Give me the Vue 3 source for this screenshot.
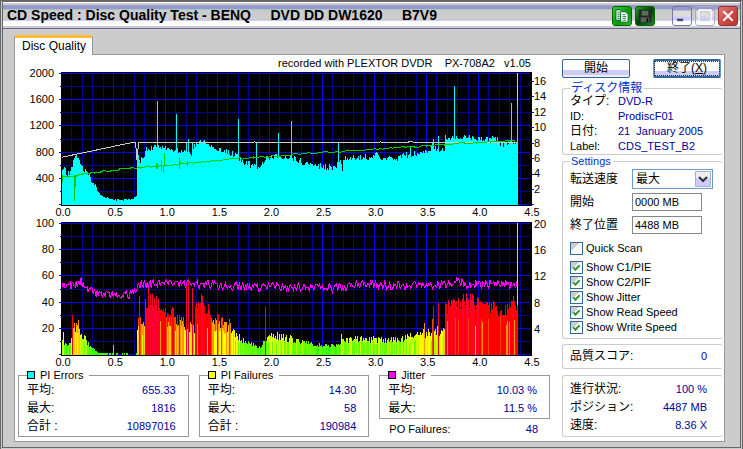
<script setup>
import { ref } from 'vue'

const PLOT_LEFT = 62
const STEP = 52

function lcg(seed) {
  let s = seed
  return () => {
    s = (s * 1664525 + 1013904223) % 4294967296
    return s / 4294967296
  }
}

function at(points, x) {
  for (let i = 1; i < points.length; i++) {
    const [x0, y0] = points[i - 1]
    const [x1, y1] = points[i]
    if (x <= x1) return x1 === x0 ? y1 : y0 + ((y1 - y0) * (x - x0)) / (x1 - x0)
  }
  return points[points.length - 1][1]
}

/* PI errors: smoothed profile plus isolated peaks */
const pieProfile = [
  [62, 172], [64, 168], [66, 174], [70, 173], [73, 161], [76, 155], [79, 160], [82, 168], [88, 175],
  [92, 181], [95, 185], [98, 193], [102, 196], [107, 198], [114, 200], [125, 200], [133, 199], [136, 196],
  [137, 157], [140, 160], [143, 159], [146, 148], [152, 149], [157, 144], [161, 147], [167, 149],
  [175, 150], [182, 152], [188, 155], [192, 153], [194, 145], [197, 142], [203, 142], [208, 145], [214, 148], [222, 151],
  [230, 153], [237, 155], [241, 162], [248, 164], [255, 167], [259, 170], [262, 164], [267, 157],
  [280, 157], [290, 157], [296, 160], [304, 163], [314, 165], [324, 167], [335, 167], [337, 157], [341, 167],
  [342, 157], [354, 158], [367, 157], [375, 155], [383, 159], [397, 158], [404, 155], [417, 154],
  [427, 151], [431, 146], [437, 149], [443, 149], [444, 138], [457, 137], [470, 138], [484, 138],
  [496, 140], [499, 144], [517, 144],
]
const piePeaks = {
  157: 101, 176: 114, 186: 143, 188: 139, 192: 143, 238: 119, 256: 143, 278: 133, 290: 121, 337: 143, 341: 171,
  409: 148, 432: 139, 437: 136, 453: 86, 510: 103, 516: 105,
}
const noise = lcg(11)
let piePath = ''
for (let x = 62; x < 517; x++) {
  const y = piePeaks[x] ?? Math.round(at(pieProfile, x) + (noise() - 0.5) * (x > 92 && x < 137 ? 2 : 6))
  piePath += `M${x} ${y}h1V205h-1z`
}

/* PI failures: one column per sample, tinted by its value */
const pifProfile = [
  [62, 342], [66, 345], [70, 341], [72, 333], [76, 323], [82, 335], [88, 344], [93, 349], [98, 353], [136, 353],
  [137, 330], [139, 320], [144, 328], [145, 302], [150, 300], [156, 304], [162, 309], [170, 313], [180, 319],
  [186, 325], [194, 327], [195, 302], [200, 299], [206, 308], [212, 318], [217, 321], [228, 327], [238, 337], [244, 342],
  [252, 344], [261, 348], [263, 338], [270, 336], [282, 336], [295, 341], [312, 344], [326, 346], [334, 345],
  [340, 341], [355, 339], [380, 340], [397, 340], [412, 336], [422, 334], [434, 331], [443, 331], [444, 307],
  [450, 302], [460, 302], [472, 301], [486, 305], [496, 309], [502, 312], [510, 307], [517, 305],
]
const pifPeaks = {
  63: 332, 72: 315, 113: 345, 139: 296, 148: 286, 150: 294, 152: 294, 156: 296, 186: 285, 188: 279, 192: 288,
  202: 296, 217: 314, 229: 319, 265: 307, 340: 334, 423: 323, 431: 319, 432: 306, 437: 303,
  462: 294, 465: 293, 471: 294, 512: 296,
}
function tint(y) {
  const v = (354 - y) / 1.31
  if (v < 6) return '#33ff00'
  if (v < 10) return '#66ff00'
  if (v < 12) return '#aaff00'
  if (v < 15) return '#ccff00'
  if (v < 19) return '#ffff00'
  if (v < 22) return '#ffcc00'
  if (v < 26) return '#ff9900'
  if (v < 29) return '#ff4400'
  if (v < 41) return '#ff0000'
  return '#ff0033'
}
const pifBars = []
const rough = lcg(29)
for (let x = 62; x < 517; x++) {
  const base = at(pifProfile, x)
  const quiet = x > 97 && x < 137
  if (quiet && x > 107 && x !== 113 && rough() < 0.65) continue
  const depth = 354 - base
  const y = pifPeaks[x] ?? Math.round(base + (quiet ? 0 : (rough() - 0.5) * Math.min(15, depth * 0.5)))
  pifBars.push({ x, y, h: 355 - y, fill: tint(y) })
  if (!quiet && rough() < 0.4 && !pifPeaks[x]) {
    const low = Math.round(354 - (354 - y) * (0.62 + rough() * 0.25))
    pifBars.push({ x, y: low, h: 355 - low, fill: tint(low) })
  }
}

const jitterProfile = [
  [62, 285], [74, 286], [81, 281], [86, 287], [95, 292], [106, 295], [118, 297], [126, 295], [134, 293],
  [137, 286], [139, 284], [165, 283], [190, 284], [212, 284], [220, 287], [240, 286], [258, 287], [270, 286],
  [300, 287], [320, 288], [345, 287], [352, 284], [380, 284], [400, 285], [440, 285], [458, 282], [465, 284], [500, 284], [516, 285],
]
const jit = lcg(5)
const jitter = []
for (let x = 62; x < 517; x++) jitter.push(`${x},${Math.round(at(jitterProfile, x) + (jit() - 0.5) * 9)}`)

const speedProfile = [[62, 177], [75, 175], [120, 169], [167, 165], [217, 160], [280, 155], [340, 151], [403, 147], [460, 143], [516, 140]]
const wob = lcg(8)
const readSpeed = []
for (let x = 62; x < 516; x += 2) readSpeed.push(`${x},${Math.round(at(speedProfile, x) + (wob() - 0.5) * 1.4)}`)

const charts = [
  {
    id: 'pie', title: 'PI errors and speed', box: '15 55 545 164', top: 73,
    left: ['2000', '1600', '1200', '800', '400'],
    right: ['16', '14', '12', '10', '8', '6', '4', '2'].map((t, i) => ({ t, y: 81 + Math.round(i * 15.4) })),
  },
  {
    id: 'pif', title: 'PI failures and jitter', box: '15 219 545 150', top: 223,
    left: ['100', '80', '60', '40', '20'],
    right: ['20', '16', '12', '8', '4'].map((t, i) => ({ t, y: 224 + Math.round(i * 26.2) })),
  },
]
const rows = Array.from({ length: 11 }, (_, i) => ({ y: Math.round(i * 13.1), major: i % 2 === 0 }))
const cols = Array.from({ length: 45 }, (_, i) => ({ x: PLOT_LEFT - 1 + Math.round((i + 1) * 10.4), major: i % 5 === 4 }))
const axis = Array.from({ length: 10 }, (_, i) => ({ t: (i / 2).toFixed(1), x: PLOT_LEFT + 1 + i * STEP }))

const heading = 'CD Speed : Disc Quality Test - BENQ' + '\u00a0'.repeat(5) + 'DVD DD DW1620' + '\u00a0'.repeat(5) + 'B7V9'
const recorder = 'recorded with PLEXTOR DVDR\u00a0\u00a0\u00a0 PX-708A2\u00a0\u00a0 v1.05'

const discInfo = [
  ['タイプ:', 'DVD-R'],
  ['ID:', 'ProdiscF01'],
  ['日付:', '21  January 2005'],
  ['Label:', 'CDS_TEST_B2'],
]
const stats = [
  { name: 'PI Errors', color: '#00ffff', rows: [['平均:', '655.33'], ['最大:', '1816'], ['合計 :', '10897016']] },
  { name: 'PI Failures', color: '#ffff00', rows: [['平均:', '14.30'], ['最大:', '58'], ['合計 :', '190984']] },
  { name: 'Jitter', color: '#ff00ff', rows: [['平均:', '10.03 %'], ['最大:', '11.5 %']] },
]
const progress = [['進行状況:', '100 %'], ['ポジション:', '4487 MB'], ['速度:', '8.36 X']]

const speed = ref('最大')
const start = ref('0000 MB')
const end = ref('4488 MB')
const quick = ref(false)
const shows = ref([
  { label: 'Show C1/PIE', on: true },
  { label: 'Show C2/PIF', on: true },
  { label: 'Show Jitter', on: true },
  { label: 'Show Read Speed', on: true },
  { label: 'Show Write Speed', on: true },
])
</script>

<template>
  <div class="window">
    <header class="titlebar">
      <h1>{{ heading }}</h1>
      <button class="cap green" aria-label="Copy">
        <svg viewBox="0 0 19 19"><path d="M3 3h5l2 2v9H3z" fill="#cfe8cf" stroke="#063" /><path d="M8 5h5l3 3v8H8z" fill="#fff" stroke="#063" /><path d="M10 8h3M10 10h4M10 12h4M10 14h4M5 6h2M5 8h2M5 10h2M5 12h2" stroke="#474" /></svg>
      </button>
      <button class="cap green dark" aria-label="Save">
        <svg viewBox="0 0 19 19"><path d="M3 3h13v13H4l-1-1z" fill="#222a22" /><path d="M6 4h7v5H6z" fill="#567056" /><path d="M5 11h9v5H5z" fill="#59645c" /><path d="M11 12h2v4h-2z" fill="#111" /></svg>
      </button>
      <span class="spacer"></span>
      <button class="cap" aria-label="Minimize">
        <svg viewBox="0 0 19 19"><path d="M4 12h7v3H4z" fill="#336" stroke="#fff" stroke-width=".5" /></svg>
      </button>
      <button class="cap faded" aria-label="Maximize">
        <svg viewBox="0 0 19 19"><path d="M4 4h11v11H4z" fill="none" stroke="#fff" stroke-width="3" /><path d="M4.500 5h10v9h-10z" fill="none" stroke="#b4b4b4" /></svg>
      </button>
      <button class="cap close" aria-label="Close">
        <svg viewBox="0 0 19 19"><path d="M4.500 4.500l10 10M14.500 4.500l-10 10" stroke="#fff" stroke-width="2" /></svg>
      </button>
    </header>

    <main class="body">
      <nav><button class="tab">Disc Quality</button></nav>
      <div class="panel">
        <section class="left">
          <svg v-for="c in charts" :key="c.id" class="chart" :viewBox="c.box" role="img" :aria-label="c.title">
            <text v-if="c.id === 'pie'" x="530" y="67" text-anchor="end">{{ recorder }}</text>
            <g shape-rendering="crispEdges">
              <rect x="61" :y="c.top - 1" width="470" height="134" fill="#000" />
              <rect v-for="l in cols.filter(l => !l.major && l.x < 530)" :key="'m' + l.x" :x="l.x" :y="c.top" width="1" height="132" fill="#000099" />
              <rect v-for="r in rows" :key="r.y" :x="r.major ? 59 : 60" :y="c.top + r.y" :width="r.major ? 470 : 469" height="1" :fill="r.major ? '#0000ff' : '#000099'" />
              <rect v-for="l in cols.filter(l => l.major && l.x < 528)" :key="l.x" :x="l.x" :y="c.top" width="1" height="132" fill="#0000ff" />
            </g>
            <g v-if="c.id === 'pie'" shape-rendering="crispEdges">
              <path :d="piePath" fill="#00ffff" />
              <path d="M530 81h3M530 96h3M530 112h3M530 127h3M530 143h3M530 158h3M530 174h3M530 189h3M530 204h3" stroke="#0000ff" />
              <path d="M62 157L98 149.500L131 142.500H135.500L136.500 160L138.500 142.500H252L254 141.500L256 142.500H378L380 141.500L382 142.500H407L408 141.500H412L413 142.500H516" fill="none" stroke="#cccccc" />
              <rect x="516" y="73" width="1" height="32" fill="#cccccc" />
              <polyline :points="readSpeed.join(' ')" fill="none" stroke="#00cc00" stroke-width="1" />
              <path d="M62.500 175v7M74.500 175v26M75.500 175v12M156.500 163v6M157.500 163v6M161.500 160v11M163.500 165v8M164.500 153v13M179.500 158v11M180.500 161v4M187.500 161v5M253.500 156v3" stroke="#00cc00" />
            </g>
            <g v-else shape-rendering="crispEdges">
              <rect v-for="(b, i) in pifBars" :key="i" :x="b.x" :y="b.y" width="1" :height="b.h" :fill="b.fill" />
              <polyline :points="jitter.join(' ')" fill="none" stroke="#ff00ff" stroke-width="1" />
              <rect x="516" y="223" width="1" height="82" fill="#cccccc" />
            </g>
            <g>
              <text v-for="(t, i) in c.left" :key="t" x="54" :y="c.top + 4 + Math.round(i * 26.2)" text-anchor="end">{{ t }}</text>
              <text v-for="r in c.right" :key="r.t" x="533" :y="r.y + 4">{{ r.t }}</text>
              <text v-for="a in axis" :key="a.t" :x="a.x" :y="c.top + 143" text-anchor="middle">{{ a.t }}</text>
            </g>
          </svg>

          <div class="stats">
            <div v-for="s in stats" :key="s.name" class="stat">
              <fieldset>
                <legend><i :style="{ background: s.color }"></i>{{ s.name }}</legend>
                <dl>
                  <div v-for="r in s.rows" :key="r[0]"><dt>{{ r[0] }}</dt><dd>{{ r[1] }}</dd></div>
                </dl>
              </fieldset>
              <dl v-if="s.name === 'Jitter'" class="po"><div><dt>PO Failures:</dt><dd>48</dd></div></dl>
            </div>
          </div>
        </section>

        <aside class="side">
          <div class="actions">
            <button class="btn">開始</button>
            <button class="btn focus"><span>終了(<u>X</u>)</span></button>
          </div>
          <fieldset class="box disc">
            <legend>ディスク情報</legend>
            <dl class="info">
              <div v-for="r in discInfo" :key="r[0]"><dt>{{ r[0] }}</dt><dd>{{ r[1] }}</dd></div>
            </dl>
          </fieldset>
          <fieldset class="box settings">
            <legend>Settings</legend>
            <div class="field first">
              <label for="speed">転送速度</label>
              <span class="combo">
                <select id="speed" v-model="speed"><option>最大</option></select>
                <svg viewBox="0 0 16 16"><path d="M0 0h16v16H0z" fill="#ccccff" /><path d="M0 0h16v7H0z" fill="#eeeeee" /><path d="M.5.5h15v15H.5z" fill="none" stroke="#aaaacc" /><path d="M4 6l4 4 4-4" fill="none" stroke="#333" stroke-width="2" /></svg>
              </span>
            </div>
            <div class="field"><label for="start">開始</label><input id="start" v-model="start" type="text" /></div>
            <div class="field"><label for="end">終了位置</label><input id="end" v-model="end" type="text" /></div>
            <label class="check quick"><input v-model="quick" type="checkbox" />Quick Scan</label>
            <label v-for="s in shows" :key="s.label" class="check"><input v-model="s.on" type="checkbox" />{{ s.label }}</label>
          </fieldset>
          <dl class="box score"><div><dt>品質スコア:</dt><dd>0</dd></div></dl>
          <dl class="box progress"><div v-for="r in progress" :key="r[0]"><dt>{{ r[0] }}</dt><dd>{{ r[1] }}</dd></div></dl>
        </aside>
      </div>
    </main>
  </div>
</template>

<style>
body { margin: 0; background: #cccccc; }
</style>

<style scoped>
* { box-sizing: border-box; }
.window {
  font: 12px/15px "Liberation Sans", "Noto Sans CJK JP", sans-serif;
  color: #000;
  background: #cccccc;
  border: 3px double #666;
  border-top: 2px solid #666;
}
button, input, select { font: inherit; color: inherit; margin: 0; padding: 0; }
.titlebar {
  display: flex;
  align-items: center;
  gap: 3px;
  height: 27px;
  padding: 1px 2px 0 4px;
  border-bottom: 1px solid #666699;
  background: linear-gradient(#fff 0 1px, #ccc 1px 3px, #9999cc 3px 7px, #99cccc 7px 8px, #ccc 8px 18px, #ccccff 18px 19px, #fff 19px 24px, #ccc 24px);
}
h1 { flex: 1; margin: 0; font-size: 14px; font-weight: bold; white-space: nowrap; }
.cap {
  width: 20px;
  height: 20px;
  border: 1px solid #7777aa;
  border-radius: 3px;
  background: linear-gradient(#9999cc 0 3px, #ddd 4px 9px, #ccccff 10px 13px, #fff 14px);
}
.cap svg { display: block; width: 100%; height: 100%; }
.green { border-color: #006600; background: linear-gradient(135deg, #33cc33, #009900 60%, #33bb33); }
.dark { background: linear-gradient(135deg, #339933, #004400 50%, #228833); }
.faded { border-color: #aaaacc; }
.close { border-color: #993333; background: linear-gradient(135deg, #dd7777, #cc4444 60%, #bb3333); }
.spacer { width: 11px; }
.body { padding: 6px 15px 5px 11px; }
nav { display: flex; }
.tab {
  height: 20px;
  padding: 0 6px 0 7px;
  border: 1px solid #999;
  border-width: 0 1px 0 1px;
  border-top: 3px solid #ffbb33;
  border-radius: 3px 3px 0 0;
  background: #fff;
  margin-bottom: -1px;
  position: relative;
}
.panel {
  display: flex;
  background: #fff;
  border: 1px solid #999;
  padding-bottom: 3px;
}
.left { flex: 1; min-width: 0; }
.chart { display: block; width: 100%; height: auto; overflow: visible; }
.chart text { font-family: "Liberation Sans", sans-serif; font-size: 11px; }
.stats { display: flex; gap: 10px; padding: 0 11px 0 3px; }
.stat { flex: 1; min-width: 0; }
fieldset { margin: 0; min-width: 0; padding: 0 12px 1px 8px; border: 1px solid #999; }
legend { display: flex; align-items: center; gap: 5px; padding: 0 6px 0 0; font-size: 11px; line-height: 11px; height: 11px; }
legend i { width: 8px; height: 8px; border: 1px solid #000; }
dl { margin: 0; }
dl div { display: flex; justify-content: space-between; line-height: 18px; height: 18px; }
dt { flex: none; white-space: pre; }
dd { margin: 0; color: #000099; font-size: 11px; white-space: pre; }
.po { padding: 1px 12px 0 10px; }
.po dt { font-size: 11px; }
.side { width: 163px; padding: 4px 1px 0 1px; }
.actions { display: flex; justify-content: space-between; padding: 0 2px 0 0; }
.btn {
  width: 68px;
  height: 19px;
  line-height: 15px;
  border: 1px solid #336699;
  border-radius: 2px;
  background: linear-gradient(#fff 0 10px, #ccccff 10px 15px, #eee 15px);
}
.focus { border: 2px solid #336699; border-color: #336699 #6699cc; }
.focus span { display: block; line-height: 13px; outline: 1px dotted #333; }
.box { border: 1px solid #ccc; border-right: none; border-radius: 3px; padding: 0 16px 0 7px; }
.actions + .box { margin-top: 4px; }
.box legend { padding: 0 2px 0 1px; color: #0033cc; line-height: 12px; height: 12px; }
.disc legend { font-size: 12px; }
.info div { justify-content: flex-start; height: 15px; line-height: 15px; }
.info dt { width: 48px; }
.info div:nth-child(even) dt { font-size: 11px; }
.settings { padding: 0 10px 3px 7px; }
.field { display: flex; align-items: center; margin-bottom: 5px; }
.first { margin: 2px 0 4px; }
.field label { width: 62px; }
.field input { width: 70px; height: 18px; padding: 0 2px; font-size: 11px; border: 1px solid #888; }
.combo { flex: 1; display: flex; align-items: center; height: 20px; border: 1px solid #6699cc; padding-right: 1px; }
.combo select { flex: 1; min-width: 0; appearance: none; border: none; background: #fff; padding-left: 3px; height: 18px; }
.combo svg { width: 16px; height: 16px; pointer-events: none; }
.check { display: flex; align-items: center; gap: 3px; height: 15px; font-size: 11px; }
.quick { margin: 7px 0 4px; }
.check input {
  appearance: none;
  width: 13px;
  height: 13px;
  border: 1px solid #336699;
  background: linear-gradient(135deg, #ccc 0 35%, #fff 40%);
  display: grid;
  place-items: center;
}
.check input:checked::after {
  content: "";
  width: 5px;
  height: 2px;
  margin-top: -2px;
  border: 2px solid #339933;
  border-width: 0 0 2px 2px;
  transform: rotate(-45deg);
}
.score { margin-top: 5px; padding: 2px 16px 3px 7px; }
.progress { margin-top: 6px; padding: 4px 16px 2px 7px; }
</style>
